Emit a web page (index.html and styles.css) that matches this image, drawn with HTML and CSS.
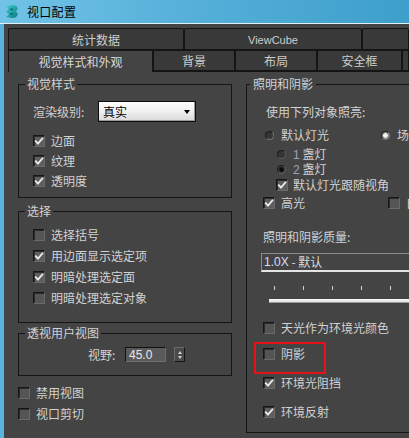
FILE: index.html
```html
<!DOCTYPE html>
<html lang="zh-CN">
<head>
<meta charset="utf-8">
<title>视口配置</title>
<link rel="stylesheet" href="styles.css">
</head>
<body>
<div class="window">
  <div class="titlebar">
    <svg class="appicon" width="14" height="15" viewBox="0 0 14 15">
      <defs>
        <linearGradient id="g1" x1="0" y1="0" x2="1" y2="1">
          <stop offset="0" stop-color="#3fd0cf"/>
          <stop offset="1" stop-color="#0b7a82"/>
        </linearGradient>
      </defs>
      <path d="M1 2 L8 1 Q13 1.5 12.5 5 Q12 7 10.5 7.5 Q13 8.5 12.5 11 Q11.5 14 7 14 L1 13 L4 10.5 L1 7.5 L4 5 Z" fill="url(#g1)"/>
      <path d="M4 5 L8 4.5 L7.5 6.5 Z M4 10.5 L8 10.5 L7.5 8.5 Z" fill="#0a5c63"/>
    </svg>
    <span class="title">视口配置</span>
  </div>
  <div class="client">
    <div class="tabs">
      <div class="tabrow row1">
        <div class="tab tab-stats">统计数据</div>
        <div class="tab tab-cube latin">ViewCube</div>
        <div class="tab tab-more"></div>
      </div>
      <div class="tabrow row2">
        <div class="tab tab-visual active">视觉样式和外观</div>
        <div class="tab tab-bg">背景</div>
        <div class="tab tab-layout">布局</div>
        <div class="tab tab-safe">安全框</div>
        <div class="tab tab-more"></div>
      </div>
    </div>
    <div class="panel">
      <div class="col col-left">
        <fieldset class="group g-visual">
          <legend>视觉样式</legend>
          <div class="render-row">
            <span class="render-label">渲染级别:</span>
            <div class="dropdown"><span class="dd-text">真实</span><span class="dd-arrow"></span></div>
          </div>
          <div class="chk-list">
            <div class="chk-row"><span class="cb on"><svg viewBox="0 0 10 10"><path d="M1.8 5.2 L4 7.6 L8.4 2.4"/></svg></span><span>边面</span></div>
            <div class="chk-row"><span class="cb on"><svg viewBox="0 0 10 10"><path d="M1.8 5.2 L4 7.6 L8.4 2.4"/></svg></span><span>纹理</span></div>
            <div class="chk-row"><span class="cb on"><svg viewBox="0 0 10 10"><path d="M1.8 5.2 L4 7.6 L8.4 2.4"/></svg></span><span>透明度</span></div>
          </div>
        </fieldset>
        <fieldset class="group g-select">
          <legend>选择</legend>
          <div class="chk-list">
            <div class="chk-row r21"><span class="cb"></span><span>选择括号</span></div>
            <div class="chk-row r21"><span class="cb on"><svg viewBox="0 0 10 10"><path d="M1.8 5.2 L4 7.6 L8.4 2.4"/></svg></span><span>用边面显示选定项</span></div>
            <div class="chk-row r21"><span class="cb on"><svg viewBox="0 0 10 10"><path d="M1.8 5.2 L4 7.6 L8.4 2.4"/></svg></span><span>明暗处理选定面</span></div>
            <div class="chk-row r21"><span class="cb"></span><span>明暗处理选定对象</span></div>
          </div>
        </fieldset>
        <fieldset class="group g-persp">
          <legend>透视用户视图</legend>
          <div class="fov-row">
            <span class="fov-label">视野:</span>
            <span class="spin-input">45.0</span>
            <span class="spin-btns"><span class="up"></span><span class="down"></span></span>
          </div>
        </fieldset>
        <div class="chk-list loose">
          <div class="chk-row r21"><span class="cb"></span><span>禁用视图</span></div>
          <div class="chk-row r21"><span class="cb"></span><span>视口剪切</span></div>
        </div>
      </div>
      <div class="col col-right">
        <fieldset class="group g-light">
          <legend>照明和阴影</legend>
          <div class="line r-use">使用下列对象照亮:</div>
          <div class="line r-radios">
            <span class="opt opt-first"><span class="rb"></span><span>默认灯光</span></span>
            <span class="opt"><span class="rb sel-white"></span><span>场景灯光</span></span>
          </div>
          <div class="line sub r-one"><span class="rb dim"></span><span><span class="num">1</span> 盏灯</span></div>
          <div class="line sub r-two"><span class="rb dim sel-black"></span><span><span class="num">2</span> 盏灯</span></div>
          <div class="line sub-cb r-follow"><span class="cb on"><svg viewBox="0 0 10 10"><path d="M1.8 5.2 L4 7.6 L8.4 2.4"/></svg></span><span>默认灯光跟随视角</span></div>
          <div class="line r-hl">
            <span class="opt opt-first-cb"><span class="cb on"><svg viewBox="0 0 10 10"><path d="M1.8 5.2 L4 7.6 L8.4 2.4"/></svg></span><span>高光</span></span>
            <span class="opt opt-cb2"><span class="cb"></span><span>自发光</span></span>
          </div>
          <div class="line r-quality">照明和阴影质量:</div>
          <div class="quality-box"><span class="q-num">1.0X</span> - 默认</div>
          <div class="slider">
            <div class="ticks"><span></span><span></span><span></span><span></span><span></span></div>
            <div class="track"></div>
          </div>
          <div class="line cb-line r-sky"><span class="cb"></span><span>天光作为环境光颜色</span></div>
          <div class="highlight">
            <div class="line cb-line"><span class="cb"></span><span>阴影</span></div>
          </div>
          <div class="line cb-line r-ao"><span class="cb on"><svg viewBox="0 0 10 10"><path d="M1.8 5.2 L4 7.6 L8.4 2.4"/></svg></span><span>环境光阻挡</span></div>
          <div class="line cb-line r-refl"><span class="cb on"><svg viewBox="0 0 10 10"><path d="M1.8 5.2 L4 7.6 L8.4 2.4"/></svg></span><span>环境反射</span></div>
        </fieldset>
      </div>
    </div>
  </div>
</div>
</body>
</html>
```

FILE: styles.css
```css
* { box-sizing: border-box; }
html, body { margin: 0; padding: 0; }
body {
  width: 409px;
  height: 438px;
  overflow: hidden;
  background: #444444;
  font-family: "Noto Sans CJK SC", "Liberation Sans", sans-serif;
  font-size: 12px;
  line-height: 14px;
  color: #d2d2d2;
}
.window {
  display: flex;
  flex-direction: column;
  width: 409px;
  height: 438px;
}
.titlebar {
  flex: none;
  height: 24px;
  display: flex;
  align-items: center;
  padding-left: 5px;
  gap: 8px;
  background: linear-gradient(to right, #72c3e7, #56b0da 45%, #3e9fcb);
  border-bottom: 1px solid #dff1fa;
}
.appicon { display: block; margin-top: -1px; }
.title { color: #000; font-size: 12px; letter-spacing: 0.3px; }

.client {
  flex: 1;
  min-height: 0;
  display: flex;
  flex-direction: column;
  border-left: 4px solid #58b4dd;
  background: #444444;
}
.tabs { padding: 4px 0 0 4px; }
.tabrow { display: flex; }
.row1 { height: 23px; }
.row2 { height: 21px; }
.tab {
  flex: none;
  display: flex;
  align-items: center;
  justify-content: center;
  background: #393939;
  color: #cdcdcd;
  border: 1px solid #141414;
  border-bottom-width: 2px;
  border-radius: 2px 2px 0 0;
  padding-top: 1px;
}
.row2 .tab { border-top: 0; border-radius: 0; border-width: 0 1px 2px 1px; padding-top: 0; }
.row2 .tab.active { background: #444444; border-bottom: 0; color: #d6d6d6; }
.tab-stats { width: 176px; }
.tab-cube { width: 178px; }
.tab-visual { width: 145px; }
.tab-bg { width: 82px; }
.tab-layout { width: 82px; }
.tab-safe { width: 85px; }
.tab-more { flex: 1; }
.latin { font-family: "Liberation Sans", sans-serif; font-size: 11px; }

.panel {
  display: grid;
  grid-template-columns: 214px 200px;
  column-gap: 14px;
  padding-left: 14px;
  align-items: start;
}
.col { display: flex; flex-direction: column; }

.group {
  margin: 0;
  min-width: 0;
  border: 1px solid #151515;
  padding: 0;
}
.group > legend {
  font-size: 12px;
  line-height: 14px;
  padding: 0 2px;
  color: #d2d2d2;
}
.col-left .group { padding-left: 14px; }
.col-left .group > legend { margin-left: -8px; }

.g-visual { margin-top: 5px; padding-top: 10px; padding-bottom: 6px; }
.g-select { margin-top: 6px; padding-top: 6px; padding-bottom: 14px; }
.g-persp { margin-top: 3px; padding-top: 7px; padding-bottom: 13px; }

.render-row { display: flex; align-items: center; height: 21px; }
.render-label { width: 65px; }
.dropdown {
  width: 98px;
  height: 21px;
  display: flex;
  align-items: center;
  justify-content: space-between;
  padding: 0 4px 0 4px;
  border: 1px solid #0c0c0c;
  background: linear-gradient(#fdfdfd, #f0f0f0 50%, #d9d9d9);
  box-shadow: inset -1px -1px 0 #9a9a9a;
  color: #000;
}
.dd-arrow {
  width: 0; height: 0;
  border-left: 3.5px solid transparent;
  border-right: 3.5px solid transparent;
  border-top: 4px solid #000;
  margin-right: 1px;
}

.chk-list { display: flex; flex-direction: column; }
.g-visual .chk-list { margin-top: 9px; }
.chk-row { display: flex; align-items: center; gap: 6px; height: 20px; }
.chk-row.r21 { height: 21px; }
.loose { margin-top: 6px; }

.cb {
  flex: none;
  width: 12px;
  height: 12px;
  display: inline-flex;
  align-items: center;
  justify-content: center;
  background: #555555;
  border: 1px solid;
  border-color: #161616 #6a6a6a #6a6a6a #161616;
  box-shadow: inset 1px 1px 0 #2c2c2c;
}
.cb.on { background: #5e5e5e; }
.cb svg { width: 10px; height: 10px; display: block; }
.cb svg path { fill: none; stroke: #ececec; stroke-width: 1.8; stroke-linecap: square; }

.fov-row { display: flex; align-items: center; height: 15px; padding-left: 55px; }
.fov-label { width: 37px; }
.spin-input {
  width: 41px;
  height: 15px;
  display: flex;
  align-items: center;
  padding-left: 3px;
  background: #5a5a5a;
  border: 1px solid;
  border-color: #111 #6e6e6e #6e6e6e #111;
  color: #e8e8e8;
  font-family: "Liberation Sans", sans-serif;
  font-size: 12px;
}
.spin-btns {
  margin-left: 8px;
  width: 11px;
  height: 15px;
  display: flex;
  flex-direction: column;
  align-items: center;
  justify-content: center;
  gap: 2px;
  background: #4a4a4a;
  border: 1px solid;
  border-color: #6a6a6a #141414 #141414 #6a6a6a;
}
.spin-btns .up, .spin-btns .down {
  width: 0; height: 0;
  border-left: 2.5px solid transparent;
  border-right: 2.5px solid transparent;
}
.spin-btns .up { border-bottom: 3px solid #cfcfcf; }
.spin-btns .down { border-top: 3px solid #cfcfcf; }

/* right column */
.g-light {
  margin-top: 5px;
  padding: 13px 0 12px 16px;
  height: 356px;
}
.g-light > legend { margin-left: -13px; padding: 0 3px; }
.line { display: flex; align-items: center; height: 16px; white-space: nowrap; }
.r-use { padding-left: 3px; }
.r-radios { margin-top: 7px; }
.opt { display: flex; align-items: center; gap: 7px; }
.opt-first { width: 124px; padding-left: 2px; }
.opt-first-cb { width: 125px; gap: 6px; }
.opt-cb2 { gap: 6px; }
.rb {
  flex: none;
  width: 9px;
  height: 9px;
  border-radius: 50%;
  background: #353535;
  border: 1px solid;
  border-color: #1c1c1c #777 #777 #1c1c1c;
}
.rb.sel-white { background: radial-gradient(circle, #f2f2f2 0 2px, #8a8a8a 2.5px); }
.rb.sel-black { background: radial-gradient(circle, #0c0c0c 0 2px, #3a3a3a 2.5px); }
.rb.dim { border-color: #1c1c1c #5e5e5e #5e5e5e #1c1c1c; }
.sub { height: 15px; gap: 7px; padding-left: 14px; }
.r-one { margin-top: 4px; }
.num { font-family: "Liberation Sans", sans-serif; color: #9aa4c0; }
.sub-cb { height: 15px; gap: 5px; padding-left: 13px; }
.r-hl { height: 15px; margin-top: 3px; }
.r-quality { margin-top: 19px; }
.quality-box {
  margin-top: 8px;
  margin-left: -2px;
  height: 19px;
  display: flex;
  align-items: center;
  padding-left: 2px;
  border-top: 1px solid #8c8c8c;
  border-left: 1px solid #8c8c8c;
  border-bottom: 2px solid #e4e4e4;
  color: #dcdcdc;
  white-space: pre;
}
.q-num { font-family: "Liberation Sans", sans-serif; color: #d8def5; }
.slider { margin-top: 14px; display: flex; flex-direction: column; }
.ticks { display: flex; gap: 28px; padding-left: 11px; height: 4px; }
.ticks span { width: 1px; height: 4px; background: #cfcfcf; }
.track {
  margin-top: 9px;
  margin-left: 6px;
  height: 4px;
  background: #e8e8e8;
  border-top: 1px solid #f8f8f8;
  border-bottom: 1px solid #9a9a9a;
}
.cb-line { gap: 6px; }
.r-sky { margin-top: 17px; }
.highlight {
  margin-top: 6px;
  margin-left: -9px;
  width: 72px;
  height: 32px;
  border: 2px solid #e8101a;
  padding: 2px 0 0 7px;
}
.r-ao { margin-top: 1px; }
.r-refl { margin-top: 13px; }
```
